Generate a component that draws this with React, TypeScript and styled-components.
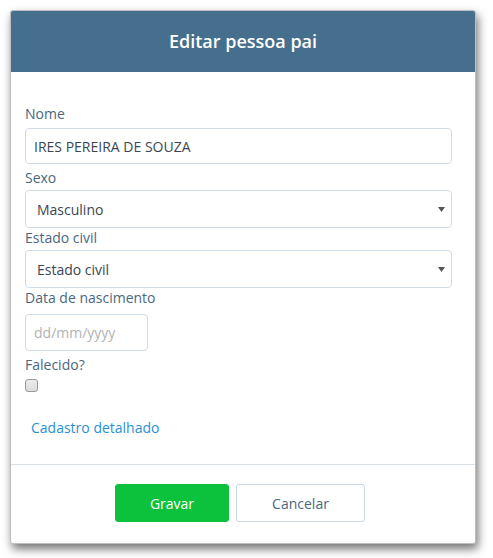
import React from "react";
import styled, { createGlobalStyle } from "styled-components";

const Global = createGlobalStyle`
  html, body { margin: 0; padding: 0; background: #ffffff; }
  body { font-family: "Open Sans", "Noto Sans", sans-serif; }
  * { box-sizing: border-box; }
`;

const Page = styled.div`
  width: 493px;
  height: 558px;
  padding: 10px 17px 16px 10px;
`;

const Modal = styled.div`
  width: 466px;
  background: #fff;
  border: 1px solid rgba(0, 0, 0, 0.25);
  border-radius: 3px;
  box-shadow: 2px 5px 10px rgba(0, 0, 0, 0.55);
  overflow: hidden;
`;

const Header = styled.div`
  height: 61px;
  background: #466f8e;
  color: #fff;
  display: flex;
  align-items: center;
  justify-content: center;
  font-size: 18px;
  font-weight: 600;
  padding-bottom: 2px;
`;

const Body = styled.div`
  padding: 32px 23px 26px 14px;
  display: flex;
  flex-direction: column;
`;

const Field = styled.div<{ $gap?: number }>`
  display: flex;
  flex-direction: column;
  margin-top: ${(p) => p.$gap ?? 0}px;
`;

const Label = styled.label<{ $mb?: number }>`
  font-size: 14px;
  line-height: 20px;
  color: #4a6780;
  margin-bottom: ${(p) => p.$mb ?? 2}px;
`;

const TextInput = styled.input<{ $w?: string; $h?: number }>`
  width: ${(p) => p.$w ?? "100%"};
  height: ${(p) => p.$h ?? 36}px;
  border: 1px solid #cddce8;
  border-radius: 4px;
  padding: 0 8px;
  font-family: inherit;
  font-size: 14px;
  color: #3a4653;
  outline: none;
  &::placeholder { color: #b3b3b3; }
`;

const SelectWrap = styled.div`
  position: relative;
`;

const Select = styled.select`
  width: 100%;
  height: 38px;
  appearance: none;
  -webkit-appearance: none;
  border: 1px solid #cddce8;
  border-radius: 4px;
  background: #fff;
  padding: 0 11px;
  font-family: inherit;
  font-size: 14px;
  color: #3a4653;
  outline: none;
`;

const Arrow = styled.svg`
  position: absolute;
  right: 7px;
  top: 17px;
  width: 7px;
  height: 5px;
  pointer-events: none;
`;

const Check = styled.input`
  appearance: none;
  -webkit-appearance: none;
  margin: 4px 0 0 0;
  width: 13px;
  height: 13px;
  border: 1px solid #9a9a9a;
  border-radius: 3px;
  background: linear-gradient(#ececec, #dcdcdc);
`;

const Link = styled.a`
  margin-top: 26px;
  margin-left: 6px;
  font-size: 14px;
  line-height: 20px;
  color: #2a8fd6;
  text-decoration: none;
  cursor: pointer;
`;

const Footer = styled.div`
  border-top: 1px solid #d8e0e6;
  display: flex;
  justify-content: center;
  gap: 7px;
  padding: 19px 6px 21px 0;
`;

const Button = styled.button<{ $primary?: boolean; $w: number }>`
  width: ${(p) => p.$w}px;
  height: 38px;
  border-radius: 3px;
  font-family: inherit;
  font-size: 14px;
  cursor: pointer;
  border: 1px solid ${(p) => (p.$primary ? "#0cc13c" : "#c9d9e6")};
  background: ${(p) => (p.$primary ? "#0cc13c" : "#fff")};
  color: ${(p) => (p.$primary ? "#fff" : "#4a6780")};
`;

function Dropdown({ value }: { value: string }) {
  return (
    <SelectWrap>
      <Select defaultValue={value}>
        <option>{value}</option>
      </Select>
      <Arrow viewBox="0 0 7 5">
        <path d="M0 0 L7 0 L3.5 5 Z" fill="#555" />
      </Arrow>
    </SelectWrap>
  );
}

export default function App() {
  return (
    <>
      <Global />
      <Page>
        <Modal>
          <Header>Editar pessoa pai</Header>
          <Body>
            <Field>
              <Label $mb={4}>Nome</Label>
              <TextInput defaultValue="IRES PEREIRA DE SOUZA" />
            </Field>
            <Field $gap={4}>
              <Label>Sexo</Label>
              <Dropdown value="Masculino" />
            </Field>
            <Field $gap={0}>
              <Label>Estado civil</Label>
              <Dropdown value="Estado civil" />
            </Field>
            <Field $gap={0}>
              <Label $mb={6}>Data de nascimento</Label>
              <TextInput $w="123px" $h={37} placeholder="dd/mm/yyyy" />
            </Field>
            <Field $gap={4}>
              <Label $mb={0}>Falecido?</Label>
              <Check type="checkbox" />
            </Field>
            <Link>Cadastro detalhado</Link>
          </Body>
          <Footer>
            <Button $primary $w={114}>Gravar</Button>
            <Button $w={129}>Cancelar</Button>
          </Footer>
        </Modal>
      </Page>
    </>
  );
}
